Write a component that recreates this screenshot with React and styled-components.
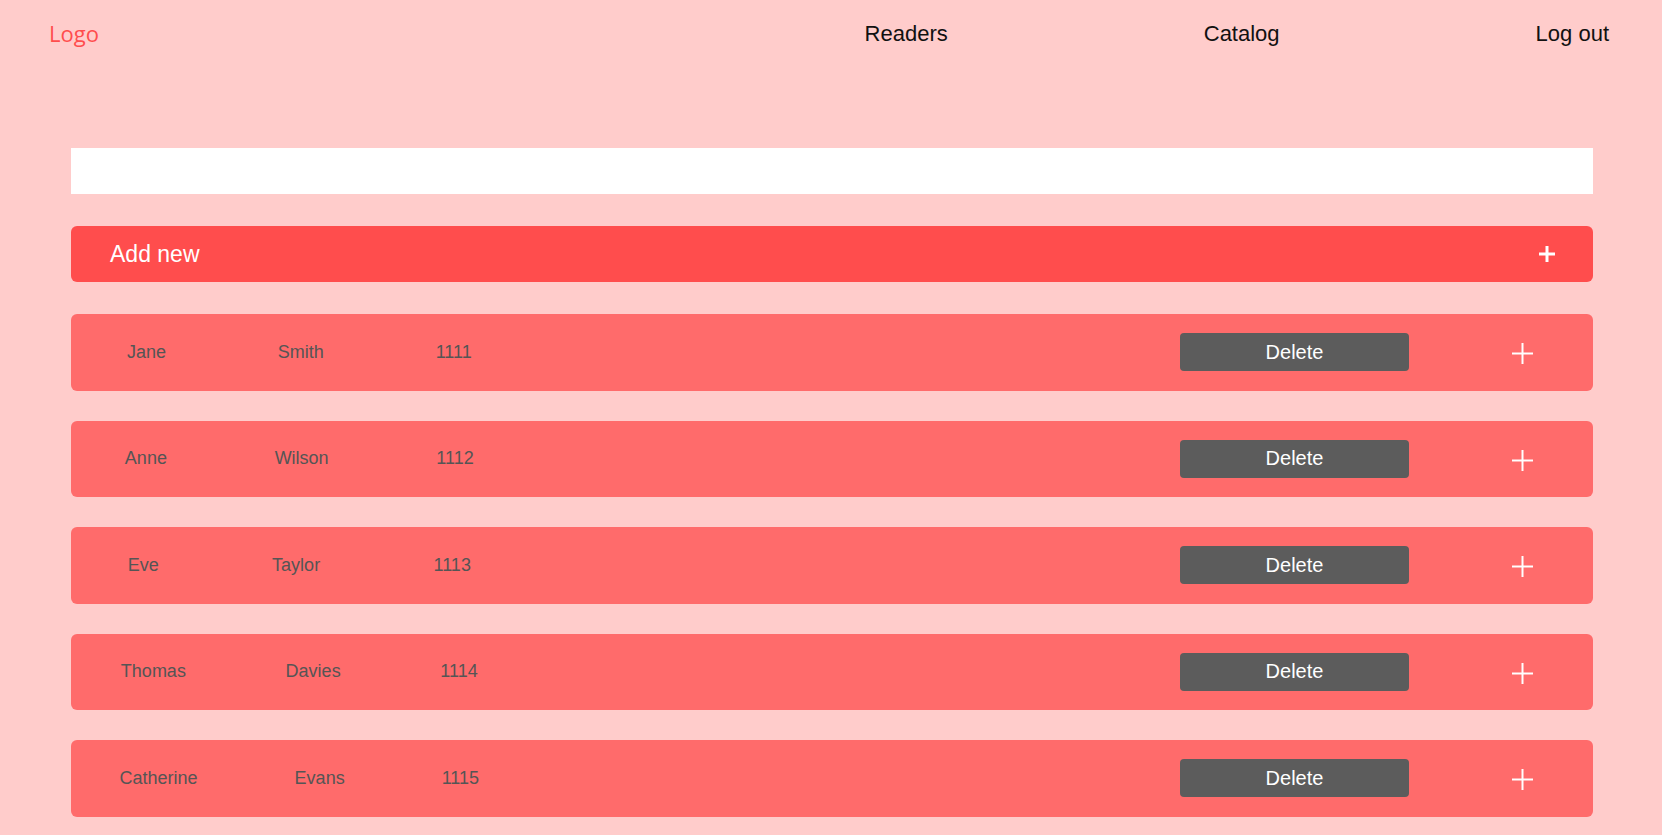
import React from 'react';
import styled, { createGlobalStyle } from 'styled-components';

const GlobalStyle = createGlobalStyle`
    body {
        margin: 0;
        background-color: #ffcccb;
        font-family: "Liberation Sans", Arial, sans-serif;
    }
`
const Header = styled.header`
    display: flex;
    justify-content: space-between;
    align-items: center;
    box-sizing: border-box;
    height: 67px;
    padding: 0 53px 0 49px;
`
const Logo = styled.div`
    font-family: "Open Sans", "Noto Sans", sans-serif;
    font-size: 22px;
    color: #ff4d4d;
    padding-bottom: 1px;
    cursor: pointer;
`
const Nav = styled.nav`
    display: flex;
    align-items: center;
    gap: 256px;
`
const NavLink = styled.a`
    font-size: 22px;
    color: #111111;
    text-decoration: none;
    cursor: pointer;
`
const Main = styled.main`
    display: flex;
    flex-direction: column;
    padding: 81px 69px 0 71px;
`
const Search = styled.input`
    box-sizing: border-box;
    width: 100%;
    height: 46px;
    border: none;
    outline: none;
    background-color: #ffffff;
    padding: 0 16px;
    font-size: 18px;
`
const AddNew = styled.div`
    display: flex;
    justify-content: space-between;
    align-items: center;
    box-sizing: border-box;
    height: 56px;
    margin-top: 32px;
    padding: 0 38px 0 39px;
    background-color: #ff4d4d;
    border-radius: 6px;
    color: #ffffff;
    font-size: 23px;
    cursor: pointer;
`
const List = styled.div`
    display: flex;
    flex-direction: column;
    gap: 30px;
    margin-top: 32px;
`
const Row = styled.div`
    display: flex;
    justify-content: space-between;
    align-items: center;
    height: 76.5px;
    background-color: #ff6b6b;
    border-radius: 6px;
`
const Fields = styled.div`
    display: flex;
    justify-content: space-around;
    align-items: center;
    width: 30%;
`
const Field = styled.span`
    font-size: 18px;
    color: #555555;
`
const Actions = styled.div`
    display: flex;
    align-items: center;
    width: 46.5%;
    justify-content: flex-end;
    padding-right: 60px;
`
const DeleteButton = styled.button`
    width: 229px;
    height: 38px;
    border: none;
    border-radius: 4px;
    background-color: #5c5c5c;
    color: #ffffff;
    font-family: "Liberation Sans", Arial, sans-serif;
    font-size: 20px;
    cursor: pointer;
`
const PlusButton = styled.div`
    display: flex;
    margin-left: ${props => props.gap || 0}px;
    margin-top: ${props => props.shift || 0}px;
    cursor: pointer;
`

const Plus = ({ size, stroke }) => (
    <svg width={size} height={size} viewBox={`0 0 ${size} ${size}`}>
        <line x1="0" y1={size / 2} x2={size} y2={size / 2} stroke="#fff" strokeWidth={stroke} />
        <line x1={size / 2} y1="0" x2={size / 2} y2={size} stroke="#fff" strokeWidth={stroke} />
    </svg>
)

const readers = [
    { name: 'Jane', surname: 'Smith', id: 1111 },
    { name: 'Anne', surname: 'Wilson', id: 1112 },
    { name: 'Eve', surname: 'Taylor', id: 1113 },
    { name: 'Thomas', surname: 'Davies', id: 1114 },
    { name: 'Catherine', surname: 'Evans', id: 1115 },
]

export default function App() {
    return (
        <>
            <GlobalStyle />
            <Header>
                <Logo>Logo</Logo>
                <Nav>
                    <NavLink>Readers</NavLink>
                    <NavLink>Catalog</NavLink>
                    <NavLink>Log out</NavLink>
                </Nav>
            </Header>
            <Main>
                <Search />
                <AddNew>
                    <span>Add new</span>
                    <Plus size={16} stroke={3} />
                </AddNew>
                <List>
                    {readers.map(r => (
                        <Row key={r.id}>
                            <Fields>
                                <Field>{r.name}</Field>
                                <Field>{r.surname}</Field>
                                <Field>{r.id}</Field>
                            </Fields>
                            <Actions>
                                <DeleteButton>Delete</DeleteButton>
                                <PlusButton gap={103} shift={3}>
                                    <Plus size={21} stroke={2} />
                                </PlusButton>
                            </Actions>
                        </Row>
                    ))}
                </List>
            </Main>
        </>
    )
}
